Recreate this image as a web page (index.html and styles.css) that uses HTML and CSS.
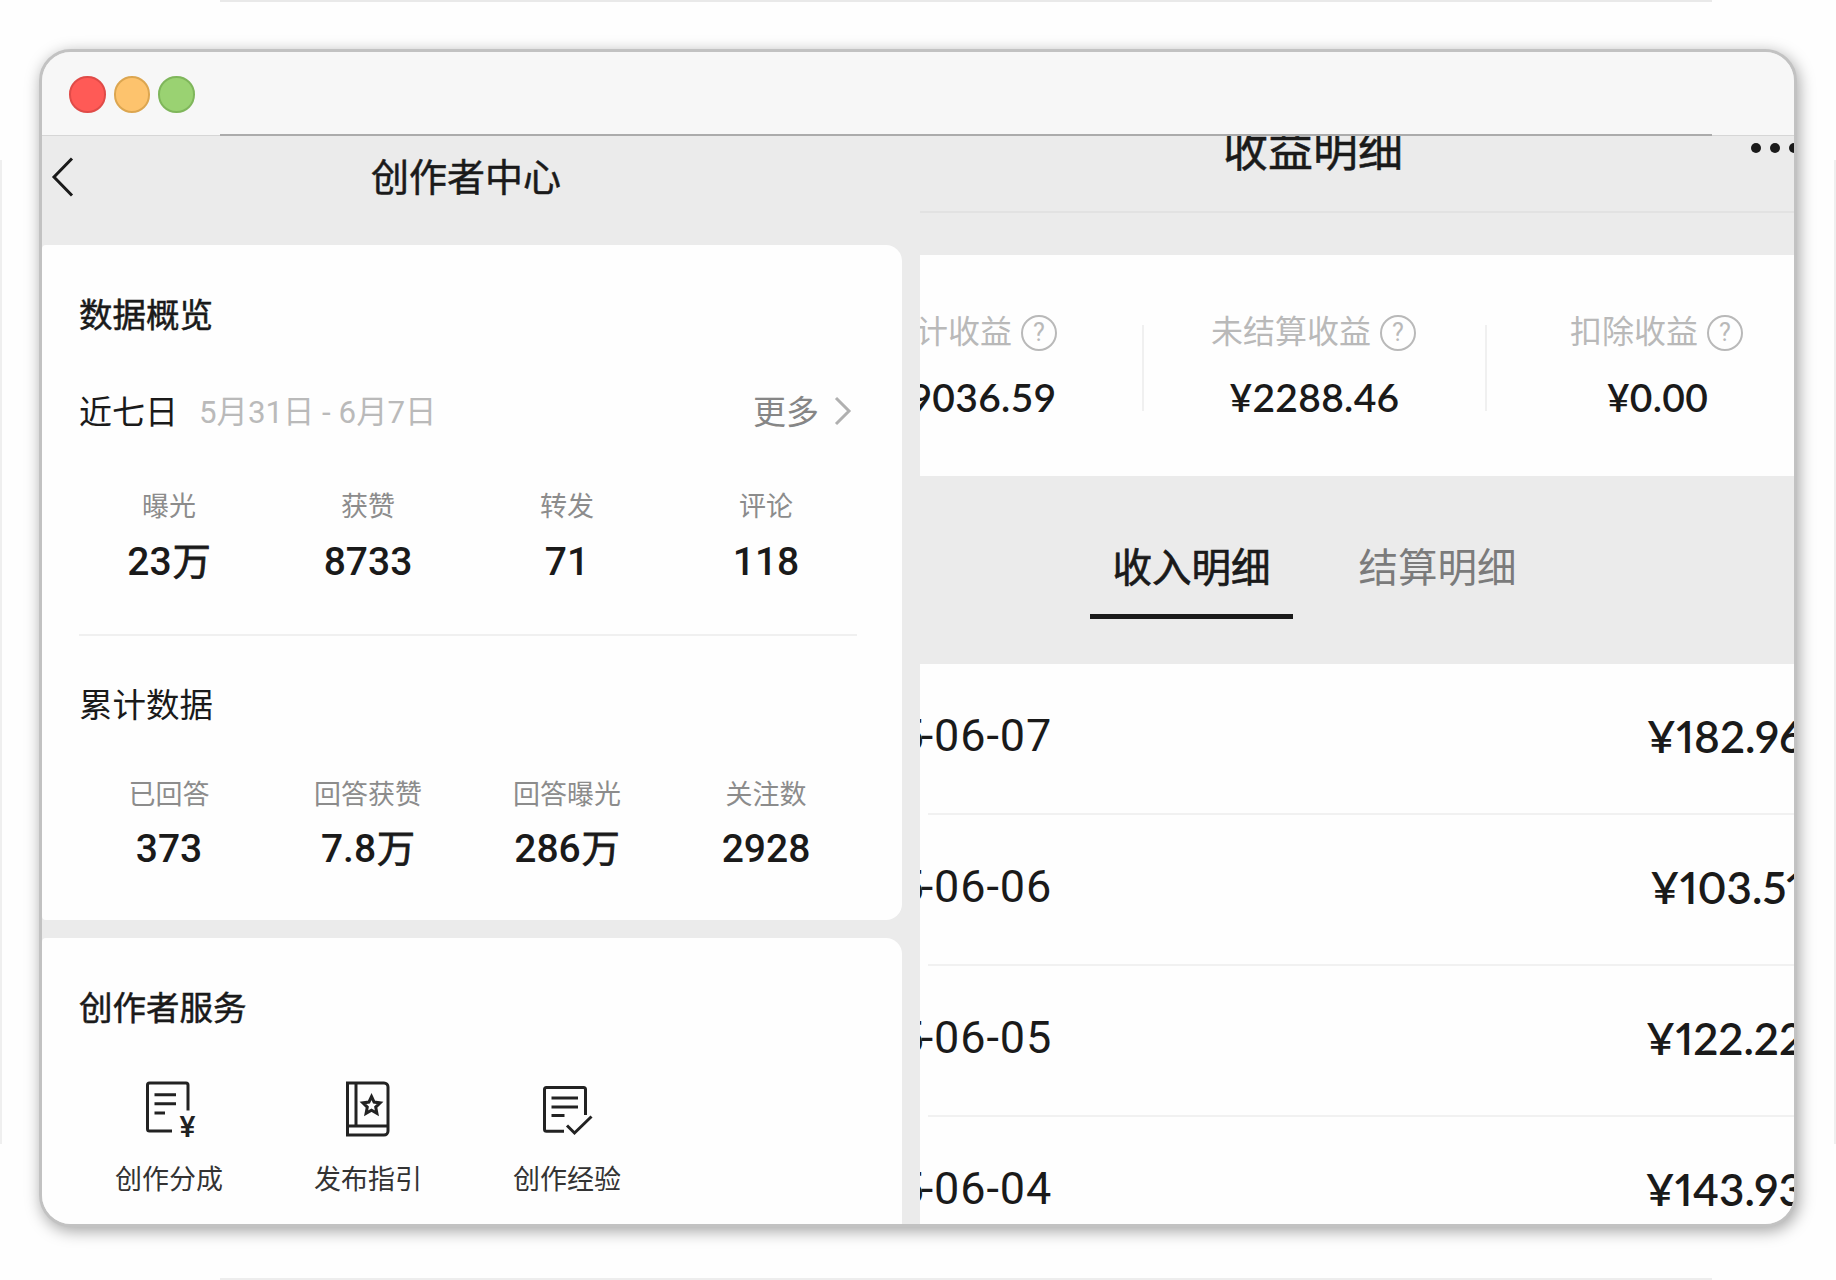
FILE: index.html
```html
<!DOCTYPE html>
<html lang="zh-Hans">
<head>
  <meta charset="UTF-8">
  <title>创作者中心</title>
  <link rel="stylesheet" href="styles.css">
</head>
<body>
  <div class="window">
    <div class="titlebar">
      <span class="dot red"></span>
      <span class="dot yellow"></span>
      <span class="dot green"></span>
    </div>
    <div class="panes">
      <!-- 创作者中心 -->
      <div class="creator">
        <div class="nav">
          <svg class="back" width="24" height="42" viewBox="0 0 24 42"><path d="M21 2.5 3 21l18 18.5"/></svg>
          <h1>创作者中心</h1>
        </div>
        <div class="card overview">
          <h2>数据概览</h2>
          <div class="period">
            <span class="days">近七日</span>
            <span class="range">5月31日 - 6月7日</span>
            <span class="more">更多</span>
            <svg class="chevron" width="18" height="32" viewBox="0 0 18 32"><path d="M2 3l13 13L2 29"/></svg>
          </div>
          <div class="stats">
            <div class="stat"><span>曝光</span><b>23<i>万</i></b></div>
            <div class="stat"><span>获赞</span><b>8733</b></div>
            <div class="stat"><span>转发</span><b>71</b></div>
            <div class="stat"><span>评论</span><b>118</b></div>
          </div>
          <hr>
          <h2 class="light">累计数据</h2>
          <div class="stats total">
            <div class="stat"><span>已回答</span><b>373</b></div>
            <div class="stat"><span>回答获赞</span><b>7.8<i>万</i></b></div>
            <div class="stat"><span>回答曝光</span><b>286<i>万</i></b></div>
            <div class="stat"><span>关注数</span><b>2928</b></div>
          </div>
        </div>
        <div class="card services">
          <h2>创作者服务</h2>
          <div class="service-list">
            <div class="service">
              <svg width="60" height="60" viewBox="0 0 60 60">
                <path d="M33 53H10.500a2 2 0 0 1-2-2V7a2 2 0 0 1 2-2H47a2 2 0 0 1 2 2V32.500M15.500 16.700H37M15.500 25.700H37M15.500 35H26"/>
                <text x="48.500" y="59">¥</text>
              </svg>
              <span>创作分成</span>
            </div>
            <div class="service">
              <svg width="60" height="60" viewBox="0 0 60 60">
                <path d="M9.500 5H46a4 4 0 0 1 4 4V53a4 4 0 0 1-4 4H9.500ZM18 5V48M9.500 48H50"/>
                <path d="M33.500 18.500l2.600 5.600 6 .8-4.400 4.200 1.200 6.200-5.400-3-5.400 3 1.200-6.200-4.400-4.200 6-.8Z"/>
              </svg>
              <span>发布指引</span>
            </div>
            <div class="service">
              <svg width="60" height="60" viewBox="0 0 60 60">
                <path d="M27 53.300H9.500a2 2 0 0 1-2-2V11.500a2 2 0 0 1 2-2H46.500a2 2 0 0 1 2 2V37M14.500 20H41M14.500 29H41M14.500 37.500H27.500M30 47.500l7.500 7.500L54.500 38.500"/>
              </svg>
              <span>创作经验</span>
            </div>
          </div>
        </div>
      </div>

      <!-- 收益明细 -->
      <div class="income">
        <div class="income-nav">
          <h1>收益明细</h1>
          <svg class="dots" width="50" height="14" viewBox="0 0 50 14"><circle cx="7" cy="7" r="5"/><circle cx="26" cy="7" r="5"/><circle cx="45" cy="7" r="5"/></svg>
        </div>
        <div class="summary">
          <div class="sum">
            <div class="sum-label">累计收益<span class="help">?</span></div>
            <div class="amount">¥9036.59</div>
          </div>
          <div class="sum">
            <div class="sum-label">未结算收益<span class="help">?</span></div>
            <div class="amount">¥2288.46</div>
          </div>
          <div class="sum">
            <div class="sum-label">扣除收益<span class="help">?</span></div>
            <div class="amount">¥0.00</div>
          </div>
        </div>
        <div class="tabs">
          <div class="tab active">收入明细</div>
          <div class="tab">结算明细</div>
        </div>
        <div class="rows">
          <div class="row"><span><i>2025</i>-06-07</span><b>¥182.96</b></div>
          <div class="row"><span><i>2025</i>-06-06</span><b>¥103.51</b></div>
          <div class="row"><span><i>2025</i>-06-05</span><b>¥122.22</b></div>
          <div class="row"><span><i>2025</i>-06-04</span><b>¥143.93</b></div>
        </div>
      </div>
    </div>
  </div>
</body>
</html>
```
FILE: styles.css
```css
* {
  box-sizing: border-box;
}
body {
  margin: 0;
  height: 1280px;
  overflow: hidden;
  background-color: #fefefe;
  background-image:
    linear-gradient(#e9e9e9, #e9e9e9),
    linear-gradient(#ededed, #ededed),
    linear-gradient(#efefef, #efefef),
    linear-gradient(#efefef, #efefef);
  background-size: 1492px 2px, 1492px 2px, 2px 984px, 2px 984px;
  background-position: 220px 0, 220px 1278px, 0 160px, 1834px 160px;
  background-repeat: no-repeat;
  font-family: Roboto, "Noto Sans CJK SC", sans-serif;
  color: #1a1a1a;
  padding: 49px 0 0 39px;
}
h1, h2 {
  margin: 0;
  font-weight: 400;
  -webkit-text-stroke: 0.5px;
}
i {
  font-style: normal;
}
.window {
  width: 1758px;
  height: 1178px;
  border: 3px solid #c2c2c2;
  border-radius: 32px;
  background-color: #ebebeb;
  overflow: hidden;
  box-shadow: 2px 4px 16px rgba(0, 0, 0, 0.36);
}
.titlebar {
  position: relative;
  display: flex;
  align-items: center;
  gap: 8px;
  height: 84px;
  padding: 2px 0 0 27px;
  background-color: #f7f7f7;
  border-bottom: 1px solid #d6d6d6;
}
/* darker middle part of the separator */
.titlebar::after {
  content: "";
  position: absolute;
  left: 178px;
  right: 82px;
  bottom: -1px;
  height: 2px;
  background-color: #ababab;
}
.dot {
  width: 36.500px;
  height: 36.500px;
  border-radius: 50%;
  border: 2px solid;
}
.red {
  background-color: #ff5a56;
  border-color: #e04b48;
}
.yellow {
  background-color: #fdc36d;
  border-color: #dca650;
}
.green {
  background-color: #9ad272;
  border-color: #7fb65b;
}
.panes {
  display: flex;
  height: 1088px;
}

/* left */
.creator {
  width: 878px;
  flex: none;
}
.nav {
  display: flex;
  height: 109px;
  padding: 20px 0 0 9px;
}
.nav h1 {
  width: 780px;
  margin-left: 1px;
  font-size: 38px;
  line-height: 44px;
  text-align: center;
}
.back, .chevron {
  flex: none;
  fill: none;
  stroke: #1a1a1a;
  stroke-width: 3;
}
.chevron {
  stroke: #b0b0b0;
}
.card {
  width: 860px;
  padding: 0 37px;
  background-color: #fefefe;
  border-radius: 4px 16px 16px 4px;
}
.card h2 {
  font-size: 33.500px;
  line-height: 40px;
}
.card h2.light {
  -webkit-text-stroke: 0;
}
.overview {
  height: 675px;
  padding-top: 51px;
}
.period {
  display: flex;
  align-items: center;
  height: 40px;
  margin-top: 55px;
}
.days {
  margin-top: -2px;
  font-size: 33px;
}
.range {
  margin: -3px 0 0 21px;
  font-size: 31.300px;
  color: #bababa;
}
.more {
  margin: -2px 0 0 auto;
  font-size: 33px;
  color: #868686;
}
.chevron {
  margin: 0 13px 0 15px;
}
.stats, .service-list {
  display: grid;
  grid-template-columns: repeat(4, 199px);
  margin-left: -9.500px;
}
.stats {
  margin-top: 58px;
}
.stat {
  display: flex;
  flex-direction: column;
  align-items: center;
}
.stat span {
  font-size: 27px;
  line-height: 36px;
  color: #8c8c8c;
}
.stat b {
  margin-top: 15px;
  font-size: 39px;
  font-weight: 500;
  line-height: 44px;
}
.stat i {
  font-weight: 400;
  font-size: 38px;
  margin-left: 1px;
  -webkit-text-stroke: 0.8px;
}
hr {
  height: 2px;
  margin: 50px 8px 0 0;
  border: none;
  background-color: #f0f0f0;
}
h2.light {
  margin-top: 50px;
}
.total {
  margin-top: 51px;
}
.total b {
  margin-top: 14px;
}
.services {
  height: 300px;
  margin-top: 18px;
  padding-top: 51px;
}
.service-list {
  margin-top: 49px;
}
.service {
  display: flex;
  flex-direction: column;
  align-items: center;
}
.service svg {
  fill: none;
  stroke: #222;
  stroke-width: 3;
}
.service text {
  fill: #222;
  stroke: none;
  font-size: 30px;
  font-weight: 500;
  text-anchor: middle;
}
.service span {
  margin-top: 24px;
  font-size: 27px;
  line-height: 36px;
  color: #333;
}

/* right */
.income {
  width: 874px;
  overflow: hidden;
}
.income-nav {
  display: flow-root;
  position: relative;
  height: 77px;
  border-bottom: 2px solid #e2e2e2;
}
.income-nav h1 {
  width: 786px;
  margin-top: -7px;
  font-size: 45px;
  line-height: 46px;
  text-align: center;
}
.dots {
  position: absolute;
  left: 829px;
  top: 5px;
  fill: #1a1a1a;
}
.summary {
  display: grid;
  grid-template-columns: repeat(3, 343px);
  width: 1029px;
  height: 221px;
  margin: 42px 0 0 -121px;
  background-color: #fefefe;
}
.sum {
  position: relative;
  display: flex;
  flex-direction: column;
  align-items: center;
  padding-top: 57px;
}
.sum + .sum::before {
  content: "";
  position: absolute;
  left: 0;
  top: 70px;
  width: 2px;
  height: 86px;
  background-color: #f0f0f0;
}
.sum-label {
  display: flex;
  align-items: center;
  font-size: 32px;
  line-height: 40px;
  color: #b9b9b9;
}
.help {
  width: 36px;
  height: 36px;
  margin: 2px 0 0 9px;
  border: 2px solid #b9b9b9;
  border-radius: 50%;
  font-size: 25px;
  line-height: 32px;
  text-align: center;
}
.amount {
  margin: 22px 0 0 2px;
  font-family: Lato, sans-serif;
  font-size: 39px;
  font-weight: 600;
  line-height: 46px;
  letter-spacing: 0.300px;
}
.tabs {
  display: flex;
  gap: 43px;
  height: 188px;
  padding: 69px 0 0 170px;
}
.tab {
  width: 203px;
  height: 74px;
  padding-top: 1px;
  font-size: 39.500px;
  line-height: 46px;
  text-align: center;
  color: #7b7b7b;
}
.tab.active {
  color: #1a1a1a;
  border-bottom: 5px solid #1a1a1a;
  -webkit-text-stroke: 0.7px;
}
.rows {
  margin-left: 8px;
  box-shadow: -8px 0 0 #fefefe;
  background-color: #fefefe;
}
.row {
  display: flex;
  justify-content: space-between;
  width: 876px;
  height: 151px;
  border-bottom: 2px solid #f1f1f1;
  line-height: 144px;
}
.row span {
  margin-left: -108px;
  font-size: 45px;
  letter-spacing: 0.900px;
}
.row i {
  margin-right: -4px;
}
.row b {
  font-family: Lato, sans-serif;
  font-size: 44px;
  font-weight: 600;
  font-feature-settings: "pnum";
}
```
